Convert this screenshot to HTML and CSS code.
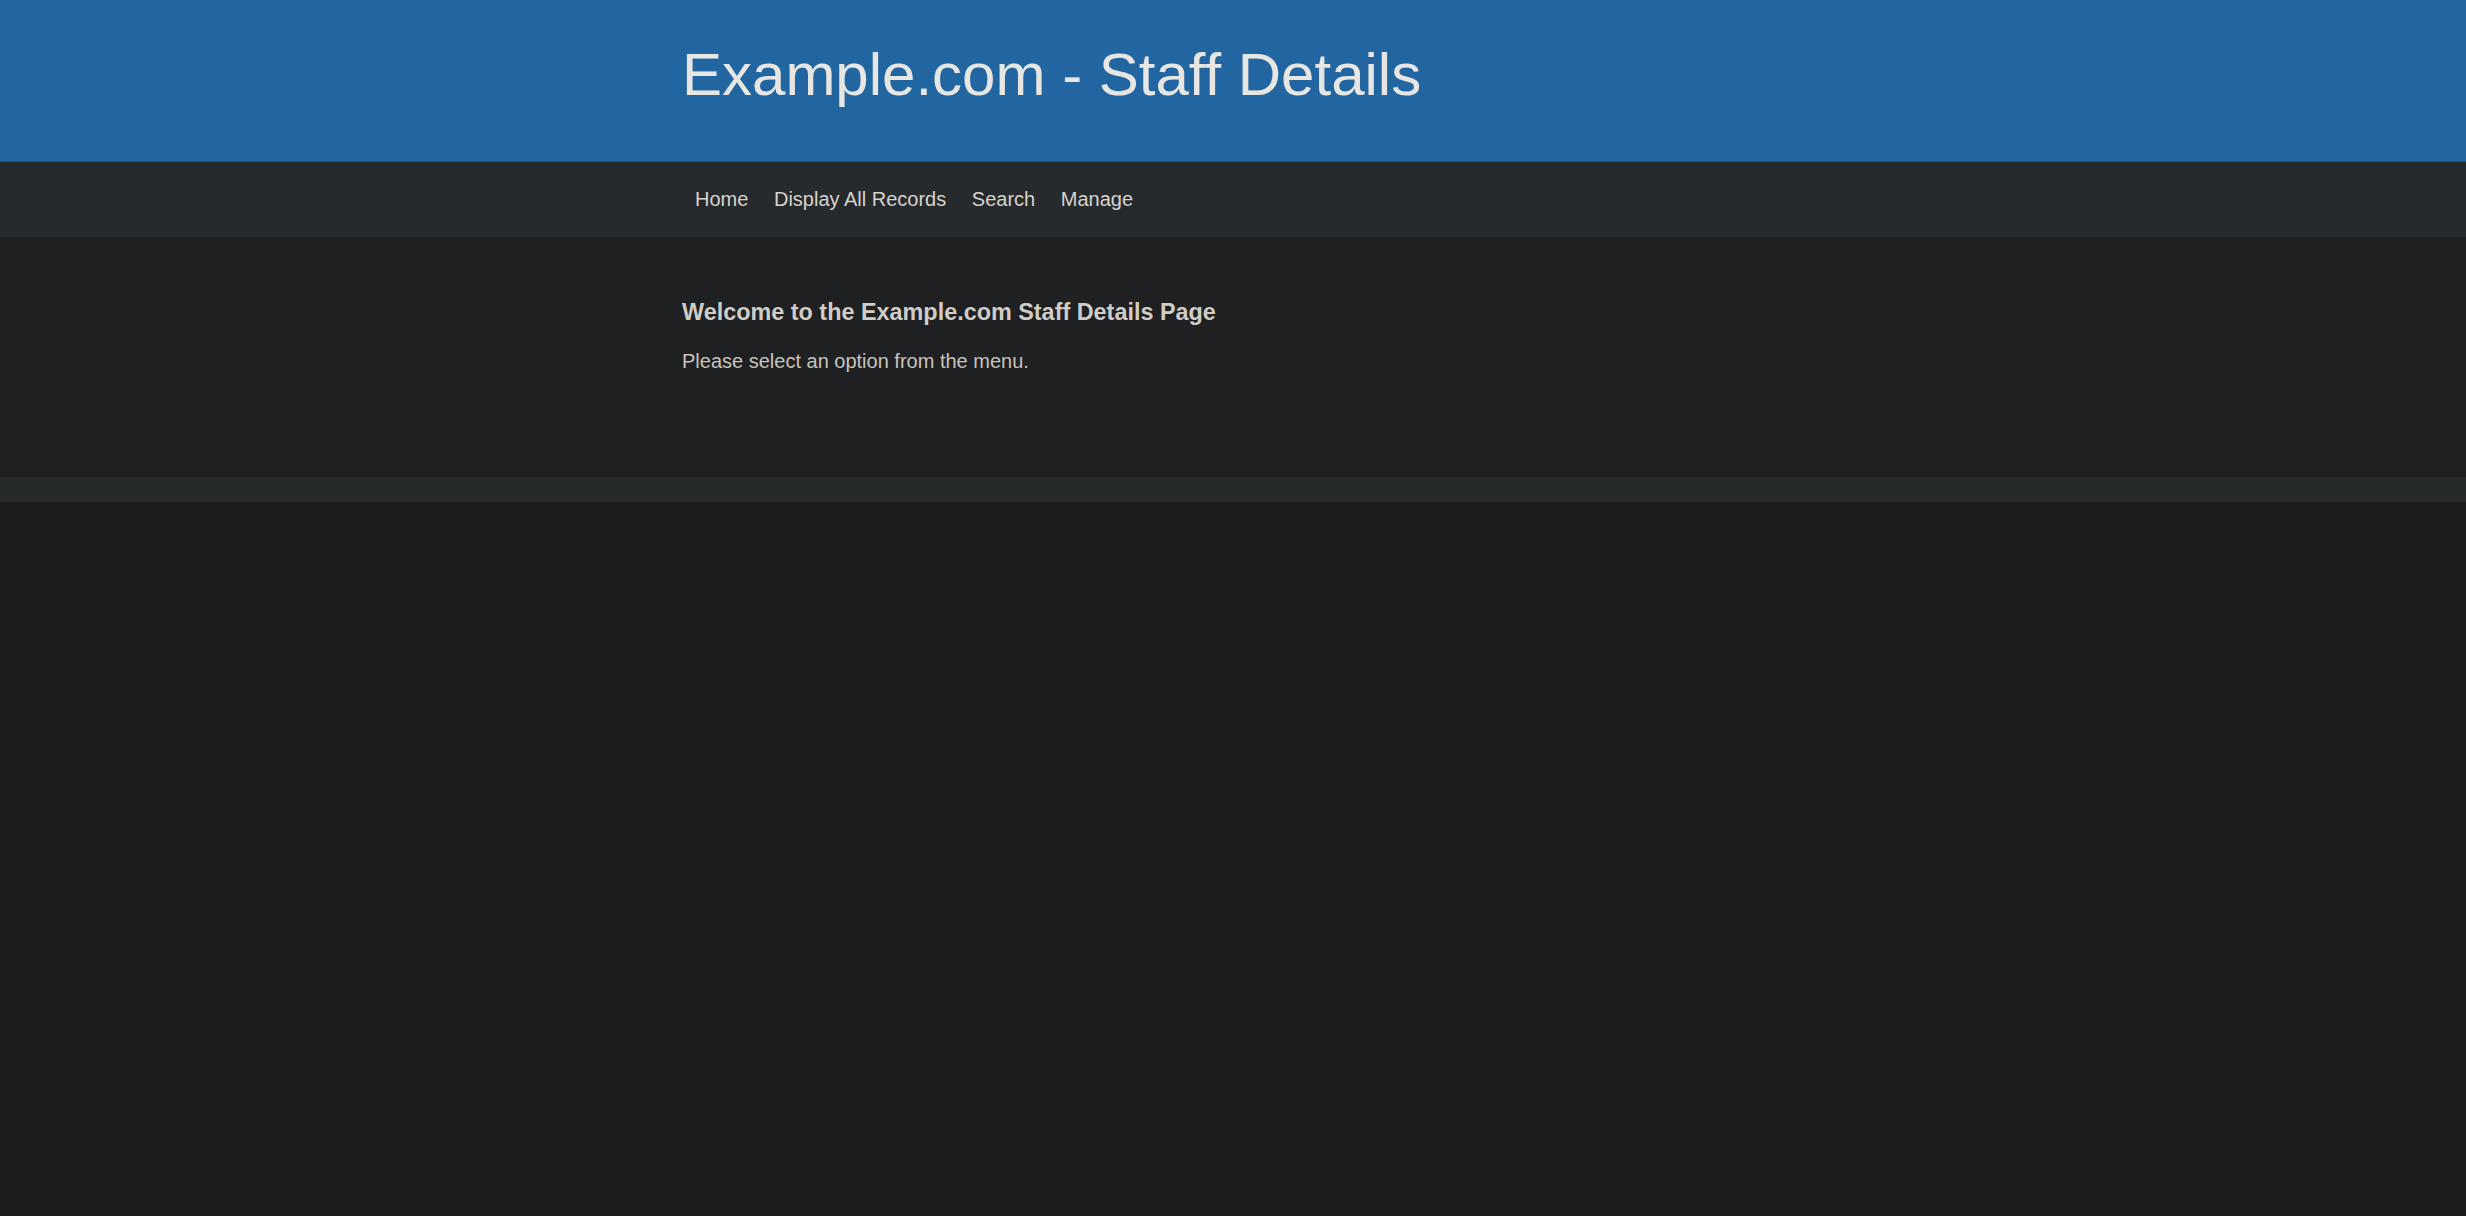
FILE: index.html
```html
<!DOCTYPE html>
<html lang="en">
<head>
<meta charset="utf-8">
<title>Example.com - Staff Details</title>
<link rel="stylesheet" href="styles.css">
</head>
<body>
<header class="site-header">
  <div class="container">
    <h1 class="site-title">Example.com - Staff Details</h1>
  </div>
</header>
<nav class="site-nav">
  <div class="container nav-list">
    <a class="nav-link" href="#">Home</a>
    <a class="nav-link" href="#">Display All Records</a>
    <a class="nav-link" href="#">Search</a>
    <a class="nav-link" href="#">Manage</a>
  </div>
</nav>
<main class="site-main">
  <div class="container">
    <h3 class="welcome">Welcome to the Example.com Staff Details Page</h3>
    <p class="intro">Please select an option from the menu.</p>
  </div>
</main>
<footer class="site-footer"></footer>
</body>
</html>
```

FILE: styles.css
```css
html, body {
  margin: 0;
  padding: 0;
}
body {
  background: #1b1c1e;
  font-family: "Liberation Sans", Arial, sans-serif;
  font-size: 20px;
  color: #c8c3bc;
  min-height: 1216px;
}
.container {
  max-width: 1102px;
  margin: 0 auto;
}
.site-header {
  background: #2166a1;
  border-bottom: 1px solid #1d5684;
  height: 162px;
  box-sizing: border-box;
  padding-top: 40px;
}
.site-title {
  margin: 0;
  font-size: 60px;
  font-weight: normal;
  line-height: 69px;
  color: #e8e6e3;
}
.site-nav {
  background: #272a2c;
  height: 75px;
  box-sizing: border-box;
  padding-top: 26px;
}
.nav-list {
  display: flex;
}
.nav-link {
  padding: 0 12.6px 0 13px;
  color: #d6d2cc;
  text-decoration: none;
  line-height: 23px;
}
.site-main {
  background: #1e2021;
  height: 240px;
  box-sizing: border-box;
  padding-top: 62px;
}
.welcome {
  margin: 0 0 24px;
  font-size: 23.4px;
  font-weight: bold;
  line-height: 27px;
  color: #d0ccc6;
}
.intro {
  margin: 0;
  line-height: 23px;
  color: #c8c3bc;
}
.site-footer {
  background: #262a2b;
  height: 25px;
}
```
